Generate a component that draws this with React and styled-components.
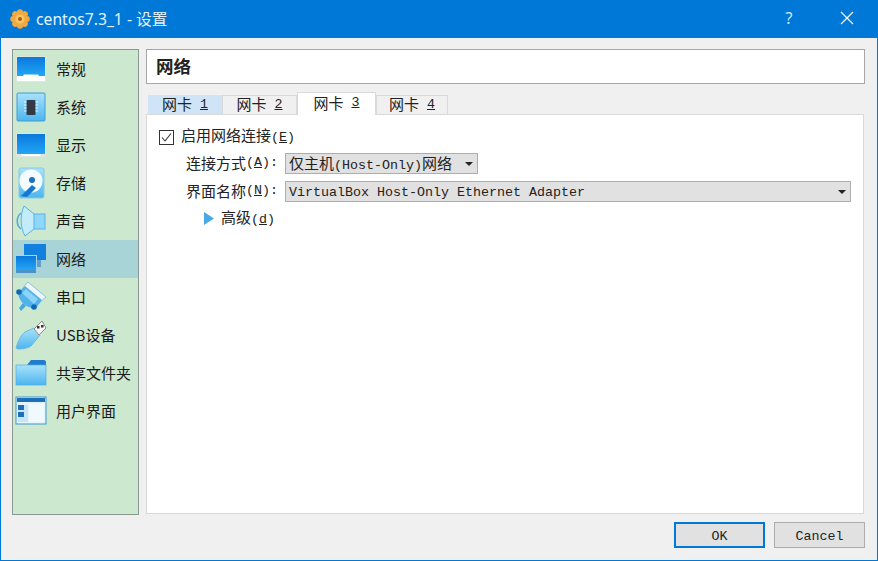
import React from 'react';
import styled, { createGlobalStyle } from 'styled-components';

const Global = createGlobalStyle`
  html, body { margin: 0; padding: 0; background: #f0f0f0; }
  * { box-sizing: border-box; }
`;
const CJK = `"Noto Sans CJK SC", sans-serif`;
const MONO = `"Liberation Mono", "Noto Sans CJK SC", monospace`;

const Window = styled.div`
  width: 878px; height: 561px; display: flex; flex-direction: column;
  background: #f0f0f0; border: 1px solid #0078d7; border-top: 0; overflow: hidden;
  font-family: ${CJK}; color: #111;
`;
const TitleBar = styled.div`
  height: 38px; flex: none; margin: 0 -1px; background: #0078d7; color: #fff;
  display: flex; align-items: center; padding: 0 2px 0 10px;
`;
const TitleText = styled.div`
  margin-left: 6px; padding-bottom: 2px; font: 15.7px "Noto Sans", ${CJK}; color: #e4f2fc; flex: 1; white-space: nowrap;
`;
const TitleButton = styled.div`
  width: 58px; display: flex; justify-content: center; align-items: center;
  font: 16px "Noto Sans", sans-serif; color: #cfe8fb; padding-bottom: 2px;
`;
const Body = styled.div`
  flex: 1; display: flex; gap: 7px; padding: 11px 12px 0 11px; min-height: 0; align-items: flex-start;
`;
const Sidebar = styled.div`
  width: 127px; height: 466px; flex: none; background: #cce8cf; border: 1px solid #8a9a90;
  display: flex; flex-direction: column;
`;
const SideItem = styled.div`
  height: 38px; flex: none; display: flex; align-items: center; padding-left: 2px; gap: 9px;
  font-size: 15px; color: #1a1a1a; white-space: nowrap;
  background: ${p => (p.$active ? '#a8d4d8' : 'transparent')};
`;
const SideLabel = styled.span`
  margin-top: -2px;
`;
const IconWrap = styled.div`
  width: 32px; height: 32px; flex: none; display: flex; align-items: center; justify-content: center;
`;
const Main = styled.div`
  flex: 1; display: flex; flex-direction: column; min-width: 0;
`;
const Header = styled.div`
  height: 35px; background: #fff; border: 1px solid #a6a6a6; display: flex; align-items: center;
  padding: 0 0 2px 9px; font-size: 17.5px; font-weight: 700; color: #222;
`;
const TabRow = styled.div`
  height: 23px; margin-top: 8px; padding-left: 2px; display: flex; align-items: flex-end; position: relative; z-index: 1;
  margin-bottom: -1px;
`;
const Tab = styled.div`
  height: ${p => (p.$active ? 23 : 20)}px; width: ${p => p.$w}px; flex: none;
  background: ${p => (p.$active ? '#fff' : p.$hover ? '#cfe5f7' : '#f0f0f0')};
  border: 1px solid ${p => (p.$hover ? '#cfe5f7' : '#d9d9d9')};
  border-bottom: ${p => (p.$active ? '0' : '1px solid #d9d9d9')};
  display: flex; align-items: center; justify-content: center; gap: 8px;
  font-size: 15px; color: #222; padding-bottom: ${p => (p.$active ? 3 : 2)}px;
`;
const TabName = styled.span`
  margin-top: -1px;
`;
const TabNum = styled.span`
  font: 13.33px ${MONO}; text-decoration: underline;
`;
const Pane = styled.div`
  height: 400px; width: 718px; background: #fff; border: 1px solid #d9d9d9; padding: 14px 12px 0 12px;
  display: flex; flex-direction: column;
`;
const CheckRow = styled.div`
  height: 16px; display: flex; align-items: center; gap: 7px; font-size: 15px; color: #222; white-space: nowrap;
`;
const CheckLabel = styled.span`
  margin-top: -6px;
`;
const Check = styled.div`
  width: 15px; height: 15px; flex: none; border: 1px solid #333; background: #fff;
  display: flex; align-items: center; justify-content: center;
`;
const Mono = styled.span`
  font: 13.33px ${MONO};
`;
const FormGrid = styled.div`
  margin-top: 8px; padding-left: 27px; display: grid; grid-template-columns: 99px 1fr; row-gap: 7px; align-items: center;
`;
const FieldLabel = styled.div`
  font-size: 15px; color: #222; white-space: nowrap; height: 21px; display: flex; align-items: center; padding-bottom: 2px;
`;
const Combo = styled.div`
  height: 21px; width: ${p => p.$w}px; background: #e1e1e1; border: 1px solid #adadad;
  display: flex; align-items: center; justify-content: space-between; padding: 0 4px 0 3px;
  font: 15px ${CJK}; color: #222; white-space: nowrap;
`;
const ComboText = styled.span`
  margin-top: -3px;
`;
const ComboMono = styled(Mono)`
  margin-top: 2px;
`;
const Caret = styled.div`
  width: 0; height: 0; border-left: 4px solid transparent; border-right: 4px solid transparent; border-top: 4px solid #222;
`;
const AdvancedRow = styled.div`
  margin-top: 6px; padding-left: 45px; height: 20px; display: flex; align-items: center; gap: 7px;
  font-size: 15px; color: #222;
`;
const AdvancedLabel = styled.span`
  margin-top: -4px;
`;
const Footer = styled.div`
  height: 38px; flex: none; padding-right: 12px; display: flex; justify-content: flex-end; align-items: flex-start; gap: 9px;
`;
const Btn = styled.div`
  width: 91px; height: 26px; background: #e1e1e1; border: ${p => (p.$primary ? '2px solid #0078d7' : '1px solid #adadad')};
  display: flex; align-items: center; justify-content: center; padding-top: 2px; font: 13.33px ${MONO}; color: #222;
`;
const U = styled.u`
  font: inherit;
`;

const grad = (id, a, b) => (
  <linearGradient id={id} x1="0" y1="0" x2="0" y2="1">
    <stop offset="0" stopColor={a} /><stop offset="1" stopColor={b} />
  </linearGradient>
);

const Svg = ({ children, size = 32 }) => (
  <svg width={size} height={size} viewBox="0 0 32 32">
    <defs>
      {grad('blue', '#0a78dc', '#22a6f5')}
      {grad('light', '#a8e2fb', '#4db5ee')}
    </defs>
    {children}
  </svg>
);

const icons = {
  general: (
    <Svg>
      <rect x="1" y="3" width="30" height="26" fill="#dfe6e2" />
      <rect x="2" y="4" width="28" height="19" fill="url(#blue)" />
      <path d="M2 23h6l1-1.500h14l1 1.500h6v5H2z" fill="#fff" />
    </Svg>
  ),
  system: (
    <Svg>
      <rect x="2" y="2" width="28" height="28" rx="1" fill="url(#light)" stroke="#3f9fd6" />
      <rect x="11.500" y="9" width="9" height="15" rx="1" fill="#333a45" />
      <path d="M9 11h2.500M9 14h2.500M9 17h2.500M9 20h2.500M20.500 11H23M20.500 14H23M20.500 17H23M20.500 20H23" stroke="#e8f4fa" />
    </Svg>
  ),
  display: (
    <Svg>
      <rect x="1" y="4" width="30" height="24" fill="#dfe6e2" />
      <rect x="2" y="5" width="28" height="20" fill="url(#blue)" />
      <path d="M6 25h20l-1 2H7z" fill="#fff" />
    </Svg>
  ),
  storage: (
    <Svg>
      <rect x="4" y="1" width="25" height="30" rx="2" fill="url(#light)" stroke="#8cc6e6" />
      <circle cx="16" cy="14" r="11.500" fill="#f4fbff" />
      <circle cx="17" cy="13" r="3" fill="#1c70c2" />
      <path d="M6 29 L17 18 L21 21 L12 30 Z" fill="#1577cf" />
    </Svg>
  ),
  audio: (
    <Svg>
      <path d="M6 8 C1 12 1 20 6 24" stroke="#4da9e0" strokeWidth="1.500" fill="none" />
      <path d="M10 12 C8 14 8 18 10 20" stroke="#4da9e0" strokeWidth="1.500" fill="none" />
      <rect x="18" y="9" width="12" height="15" fill="#8fd6f8" stroke="#58b3e6" />
      <path d="M9 1 L19 9 V24 L10 31 C5 22 5 10 9 1Z" fill="#c2ecfc" stroke="#58b3e6" />
    </Svg>
  ),
  network: (
    <Svg>
      <rect x="9" y="1" width="22" height="16" fill="#1280de" />
      <rect x="14" y="17" width="12" height="7" fill="#5f9fc8" />
      <rect x="0" y="12" width="22" height="17" fill="#a7d4e6" />
      <rect x="1" y="13" width="20" height="14" fill="url(#blue)" />
      <rect x="1" y="27" width="20" height="3" fill="#4b92c8" />
    </Svg>
  ),
  serial: (
    <Svg>
      <path d="M13 1 L31 16 L24 22 L7 8 Z" fill="#eef6fb" stroke="#8cc4e4" />
      <path d="M3 12 L10 5 L27 19 L21 27 C12 28 4 21 3 12Z" fill="#52b2ea" />
      <path d="M7 12 L11 8 L23 18 L19 23 Z" fill="#8ad4f8" />
      <circle cx="4" cy="11" r="2.800" fill="#1169b5" />
      <circle cx="19" cy="26" r="2.800" fill="#1169b5" />
      <path d="M4 27 L8 22 L11 25 L6 30 Z" fill="#4aa6df" />
    </Svg>
  ),
  usb: (
    <Svg>
      <path d="M19 9 L25 16 L16 27 C11 30 6 30 3 30 L1 29 C3 22 6 16 10 13Z" fill="url(#light)" stroke="#6ab8e4" />
      <path d="M19 10 L27 2 L31 9 L24 16Z" fill="#f5f5f5" stroke="#8c8c8c" />
      <rect x="22" y="7" width="2.500" height="2.500" fill="#333" />
      <rect x="26" y="6" width="2.500" height="2.500" fill="#333" />
    </Svg>
  ),
  folder: (
    <Svg>
      <path d="M1 8 L12 8 L16 3 H29 C30 3 31 4 31 5 V10 H1Z" fill="#1f7ccc" />
      <rect x="1" y="8" width="30" height="20" fill="url(#light)" stroke="#4dade6" strokeWidth=".7" />
    </Svg>
  ),
  ui: (
    <Svg>
      <rect x="1" y="2" width="30" height="27" fill="#e4f4fc" stroke="#3e96d2" />
      <rect x="2" y="3" width="28" height="4" fill="#1d6fba" />
      <rect x="3" y="10" width="10" height="17" fill="#c8e6f6" />
      <rect x="3" y="10" width="6" height="5" fill="#1d6fba" />
      <rect x="3" y="17" width="6" height="5" fill="#1d6fba" />
      <rect x="14" y="9" width="15" height="18" fill="#f0f9fd" />
    </Svg>
  ),
};

const items = [
  ['general', '常规'], ['system', '系统'], ['display', '显示'], ['storage', '存储'], ['audio', '声音'],
  ['network', '网络'], ['serial', '串口'], ['usb', 'USB设备'], ['folder', '共享文件夹'], ['ui', '用户界面'],
];

const tabs = [
  { n: '1', w: 74, hover: true }, { n: '2', w: 75 }, { n: '3', w: 79, active: true }, { n: '4', w: 72 },
];

export default function App() {
  return (
    <>
      <Global />
      <Window>
        <TitleBar>
          <svg width="20" height="20" viewBox="0 0 20 20">
            <circle cx="10" cy="10" r="8" fill="#f09a30" />
            {[0, 45, 90, 135, 180, 225, 270, 315].map(a => (
              <circle key={a} cx="10" cy="3.200" r="3" fill="#f4a840" transform={`rotate(${a} 10 10)`} />
            ))}
            <circle cx="10" cy="10" r="4.500" fill="#f8c860" />
            <circle cx="10" cy="10" r="2" fill="#a85a18" />
          </svg>
          <TitleText>centos7.3_1 - 设置</TitleText>
          <TitleButton>?</TitleButton>
          <TitleButton>
            <svg width="14" height="14" viewBox="0 0 14 14"><path d="M1 1 L13 13 M13 1 L1 13" stroke="#fff" strokeWidth="1.200" /></svg>
          </TitleButton>
        </TitleBar>
        <Body>
          <Sidebar>
            {items.map(([k, t]) => (
              <SideItem key={k} $active={k === 'network'}>
                <IconWrap>{icons[k]}</IconWrap>
                <SideLabel>{t}</SideLabel>
              </SideItem>
            ))}
          </Sidebar>
          <Main>
            <Header>网络</Header>
            <TabRow>
              {tabs.map(t => (
                <Tab key={t.n} $w={t.w} $active={t.active} $hover={t.hover}>
                  <TabName>网卡</TabName><TabNum>{t.n}</TabNum>
                </Tab>
              ))}
            </TabRow>
            <Pane>
              <CheckRow>
                <Check>
                  <svg width="11" height="11" viewBox="0 0 11 11"><path d="M1 5.500 L4 9 L10 1.500" fill="none" stroke="#333" strokeWidth="1.100" /></svg>
                </Check>
                <CheckLabel>启用网络连接<Mono>(<U>E</U>)</Mono></CheckLabel>
              </CheckRow>
              <FormGrid>
                <FieldLabel>连接方式<Mono>(<U>A</U>):</Mono></FieldLabel>
                <Combo $w={193}>
                  <ComboText>仅主机<Mono>(Host-Only)</Mono>网络</ComboText><Caret />
                </Combo>
                <FieldLabel>界面名称<Mono>(<U>N</U>):</Mono></FieldLabel>
                <Combo $w={566}>
                  <ComboMono>VirtualBox Host-Only Ethernet Adapter</ComboMono><Caret />
                </Combo>
              </FormGrid>
              <AdvancedRow>
                <svg width="10" height="13" viewBox="0 0 10 13"><path d="M0 0 L10 6.500 L0 13Z" fill="#4aa8e4" /></svg>
                <AdvancedLabel>高级<Mono>(<U>d</U>)</Mono></AdvancedLabel>
              </AdvancedRow>
            </Pane>
          </Main>
        </Body>
        <Footer>
          <Btn $primary>OK</Btn>
          <Btn>Cancel</Btn>
        </Footer>
      </Window>
    </>
  );
}
